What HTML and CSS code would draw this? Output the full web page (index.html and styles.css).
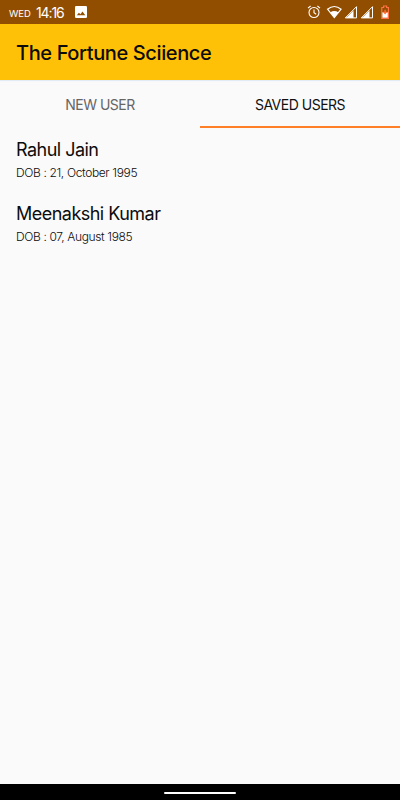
FILE: index.html
```html
<!DOCTYPE html>
<html lang="en">
<head>
  <meta charset="UTF-8" />
  <title>The Fortune Sciience</title>
  <meta name="viewport" content="width=device-width, initial-scale=1.0" />
  <link rel="stylesheet" href="styles.css">
</head>
<body>

<!-- Status bar -->
<div class="status-bar">
  <span class="day">WED</span>
  <span class="time">14:16</span>
  <svg class="photo-icon" width="12" height="12" viewBox="0 0 12 12">
    <rect width="12" height="12" rx="1.3" fill="#fff" />
    <path d="M1.8 9.3 3.9 6.7 5.4 8.3 7.5 5.4 10.3 9.3z" fill="#924e00" />
  </svg>
  <svg class="status-icons" width="84" height="14" viewBox="0 0 84 14">
    <!-- Alarm -->
    <g fill="none" stroke="#fff" stroke-width="1.1">
      <circle cx="7" cy="7.5" r="5" />
      <path d="M1 3.2 3.6 1M13 3.2 10.4 1M7 4.5v3.3l2.2 1.4" />
    </g>
    <!-- Wifi -->
    <path d="M20.5 4.2Q27.3-1.2 34.1 4.2L27.3 12.6z" fill="none" stroke="#fff" stroke-width="1.2" />
    <path d="M23.2 7.5Q27.3 4.6 31.4 7.5L27.3 12.6z" fill="#fff" />
    <!-- Signal -->
    <path d="M38.3 12.9h11.2V1.7zM54.3 12.9h11.2V1.7z" fill="none" stroke="#fff" stroke-width="1" />
    <path d="M39 12.9 46.5 5.4v7.5zM55 12.9 62.5 5.4v7.5z" fill="#fff" />
    <!-- Battery -->
    <path d="M74.8 2.5h1.8V1h3v1.5h1.8v10.8h-6.6z" fill="none" stroke="#ff7043" stroke-width="1.2" />
    <path d="M75.4 7.3h5.4v5.4h-5.4z" fill="#fff" />
    <path d="M77.4 4.8h1.4v2h1.6l-2.3 2.8-2.3-2.8h1.6z" fill="#ff6d35" />
  </svg>
</div>

<header class="app-bar">
  <h1>The Fortune Sciience</h1>
</header>

<nav class="tabs">
  <a class="tab">NEW USER</a>
  <a class="tab active">SAVED USERS</a>
</nav>

<main class="user-list">
  <div class="user">
    <div class="name">Rahul Jain</div>
    <div class="dob">DOB : 21, October 1995</div>
  </div>
  <div class="user">
    <div class="name">Meenakshi Kumar</div>
    <div class="dob">DOB : 07, August 1985</div>
  </div>
</main>

<!-- Gesture navigation bar -->
<footer class="nav-bar"><div class="handle"></div></footer>

</body>
</html>
```
FILE: styles.css
```css
body {
  margin: 0;
  height: 800px;
  display: flex;
  flex-direction: column;
  background-color: #fafafa;
  color: #0c0c0c;
  font-family: Inter, "Liberation Sans", sans-serif;
  overflow: hidden;
  white-space: nowrap;
}

.status-bar {
  height: 24px;
  box-sizing: border-box;
  padding: 0 9px;
  display: flex;
  align-items: center;
  background-color: #924e00;
  color: #fff;
}

.day {
  width: 27px;
  padding-top: 2px;
  font-size: 9.5px;
}

.time {
  width: 39px;
  font-size: 14px;
  letter-spacing: -1.1px;
}

.status-icons {
  margin-left: auto;
}

.app-bar {
  height: 56px;
  box-sizing: border-box;
  padding: 2px 16px 0;
  display: flex;
  align-items: center;
  background-color: #ffc107;
  box-shadow: 0 1px 1px #e2eaf3;
}

h1 {
  margin: 0;
  font-size: 20px;
  font-weight: 500;
  letter-spacing: -0.38px;
}

/* Tabs */
.tabs {
  height: 48px;
  display: flex;
}

.tab {
  flex: 1;
  display: flex;
  align-items: center;
  justify-content: center;
  box-sizing: border-box;
  padding-top: 2px;
  border-bottom: 2px solid transparent;
  font-size: 14px;
  letter-spacing: -0.5px;
  color: #666;
}

.tab.active {
  color: #111;
  border-bottom-color: #ff7f27;
}

/* Saved users */
.user-list {
  flex: 1;
  padding: 9px 16px;
}

.user {
  height: 64px;
}

.name {
  font-size: 18px;
  line-height: 26px;
  letter-spacing: -0.52px;
}

.dob {
  font-size: 12px;
  font-weight: 300;
  line-height: 19px;
  letter-spacing: -0.36px;
}

.nav-bar {
  height: 16px;
  display: flex;
  justify-content: center;
  background-color: #000;
}

.handle {
  width: 72px;
  height: 2px;
  margin-top: 8px;
  border-radius: 1px;
  background-color: #fff;
}
```
